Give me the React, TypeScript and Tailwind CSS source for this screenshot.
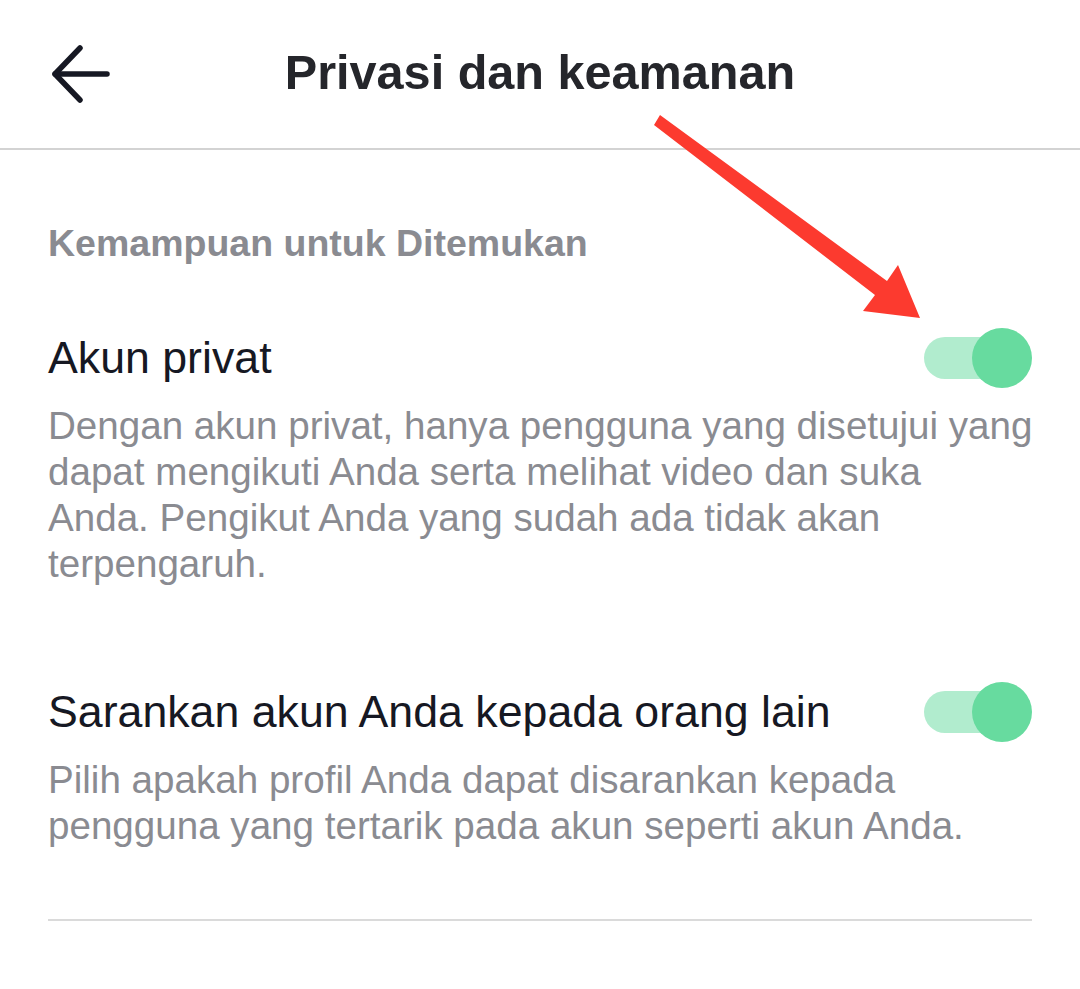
import React from "react";

const font = { fontFamily: '"Liberation Sans", Arial, sans-serif' };

function Toggle() {
  return (
    <div className="relative w-[108px] h-[60px] shrink-0">
      <div className="absolute left-0 top-[9px] w-[90px] h-[42px] rounded-full bg-[#b1ecce]" />
      <div className="absolute right-0 top-0 w-[60px] h-[60px] rounded-full bg-[#67db9f]" />
    </div>
  );
}

function SettingRow({ title, lines }: { title: string; lines: string[] }) {
  return (
    <div className="flex flex-col">
      <div className="flex items-center justify-between h-[60px]">
        <span className="text-[44.7px] leading-[60px] text-[#161823]">{title}</span>
        <Toggle />
      </div>
      <div className="mt-[15px] text-[38.6px] leading-[46px] text-[#8a8b91]">
        {lines.map((l) => (
          <div key={l} className="whitespace-nowrap">
            {l}
          </div>
        ))}
      </div>
    </div>
  );
}

export default function App() {
  return (
    <div className="relative w-[1080px] h-[989px] bg-white overflow-hidden" style={font}>
      <header className="flex items-center h-[150px] px-[46px] border-b-2 border-[#d3d3d3]">
        <button className="w-[64px] h-[64px] shrink-0">
          <svg viewBox="0 0 64 64" width="64" height="64" fill="none" stroke="#161823" strokeWidth="5.5" strokeLinecap="round" strokeLinejoin="round">
            <path d="M34 6 L9 32 L34 58" />
            <path d="M9 32 H61" />
          </svg>
        </button>
        <h1 className="flex-1 text-center text-[48.6px] font-bold text-[#25262b] -mt-[4px]">Privasi dan keamanan</h1>
        <div className="w-[64px] shrink-0" />
      </header>

      <main className="px-[48px]">
        <h2 className="mt-[71px] text-[37.5px] leading-[44px] font-bold text-[#8a8b91]">Kemampuan untuk Ditemukan</h2>

        <div className="mt-[63px]">
          <SettingRow
            title="Akun privat"
            lines={[
              "Dengan akun privat, hanya pengguna yang disetujui yang",
              "dapat mengikuti Anda serta melihat video dan suka",
              "Anda. Pengikut Anda yang sudah ada tidak akan",
              "terpengaruh.",
            ]}
          />
        </div>

        <div className="mt-[95px]">
          <SettingRow
            title="Sarankan akun Anda kepada orang lain"
            lines={[
              "Pilih apakah profil Anda dapat disarankan kepada",
              "pengguna yang tertarik pada akun seperti akun Anda.",
            ]}
          />
        </div>

        <div className="mt-[70px] h-[2px] bg-[#dadada]" />
      </main>

      {/* red annotation arrow */}
      <svg className="absolute inset-0 pointer-events-none" width="1080" height="989" viewBox="0 0 1080 989">
        <polygon points="660,115 887,281 898,265 920,318 863,311 875,295 654,125" fill="#fc3a2f" />
      </svg>
    </div>
  );
}
